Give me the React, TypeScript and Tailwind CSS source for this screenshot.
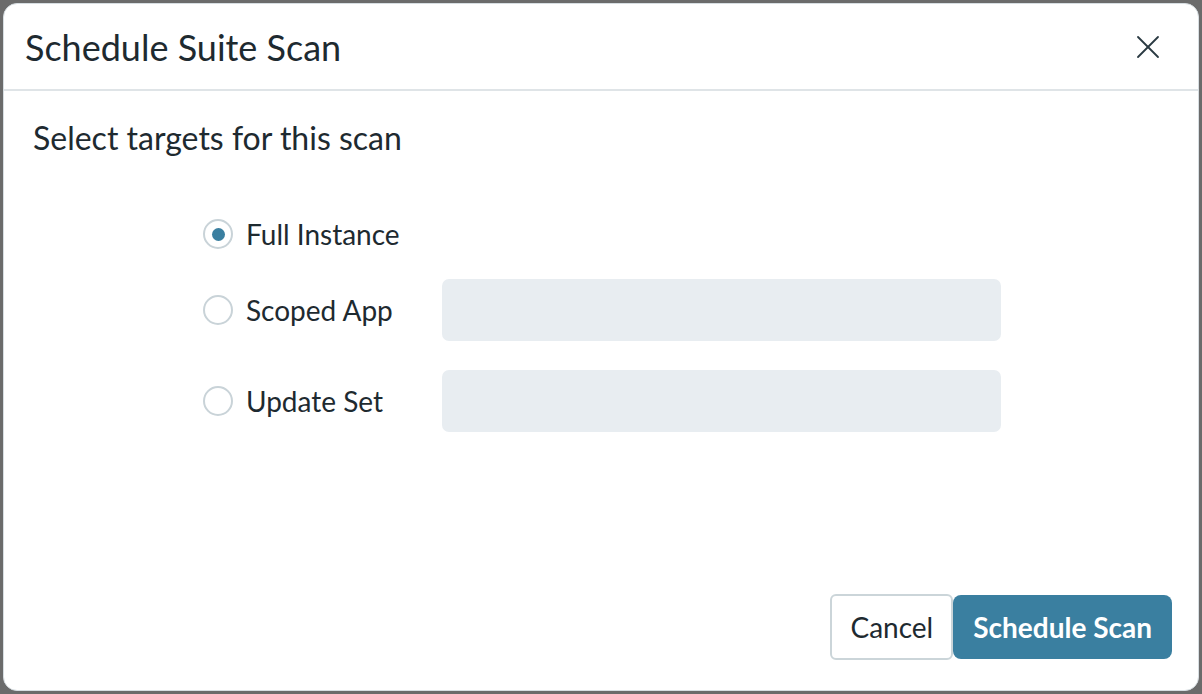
import { useState } from "react";
import { X } from "lucide-react";

const targets = [
  { id: "full", label: "Full Instance", field: false },
  { id: "scoped", label: "Scoped App", field: true },
  { id: "update", label: "Update Set", field: true },
];

export default function App() {
  const [target, setTarget] = useState("full");

  return (
    <div
      className="h-[694px] w-[1202px] bg-[#6b6b6b] p-[3px]"
      style={{ fontFamily: "Lato, 'Noto Sans', sans-serif" }}
    >
      <div className="flex h-full flex-col overflow-hidden rounded-[14px] border border-[#d7dee2] bg-white text-[#1e2a30]">
        <div className="flex h-[87px] items-center justify-between border-b-2 border-[#dfe4e7] pl-[21px] pr-[30px]">
          <h1 className="text-[36px] leading-none">Schedule Suite Scan</h1>
          <button className="text-[#2a3a42]">
            <X className="h-[40px] w-[40px]" strokeWidth={1.1} />
          </button>
        </div>

        <div className="flex-1 px-[29px] pt-[31px]">
          <p className="text-[32px] leading-none">Select targets for this scan</p>

          <div className="mt-[58px] flex flex-col pl-[170px]">
            {targets.map((t, i) => (
              <div
                key={t.id}
                className={`flex items-center ${i === 0 ? "h-[44px]" : "h-[62px]"} ${
                  i === 1 ? "mt-[23px]" : i === 2 ? "mt-[29px]" : ""
                }`}
              >
                <button
                  onClick={() => setTarget(t.id)}
                  className="flex w-[239px] items-center gap-[13px] text-[28px]"
                >
                  <span className="flex h-[30px] w-[30px] items-center justify-center rounded-full border-2 border-[#c9d3d8] bg-white">
                    {target === t.id && (
                      <span className="h-[13px] w-[13px] rounded-full bg-[#3a7fa0]" />
                    )}
                  </span>
                  {t.label}
                </button>
                {t.field && (
                  <div className="h-[62px] w-[559px] rounded-[7px] bg-[#e8edf1]" />
                )}
              </div>
            ))}
          </div>
        </div>

        <div className="flex justify-end pb-[30px] pr-[26px]">
          <button className="h-[66px] rounded-[6px] border-2 border-[#cbd5d9] bg-white px-[18px] text-[28px] text-[#1e2a30]">
            Cancel
          </button>
          <button className="my-[1px] h-[64px] rounded-[8px] bg-[#3a7fa0] px-[20px] text-[28px] font-bold text-white">
            Schedule Scan
          </button>
        </div>
      </div>
    </div>
  );
}
